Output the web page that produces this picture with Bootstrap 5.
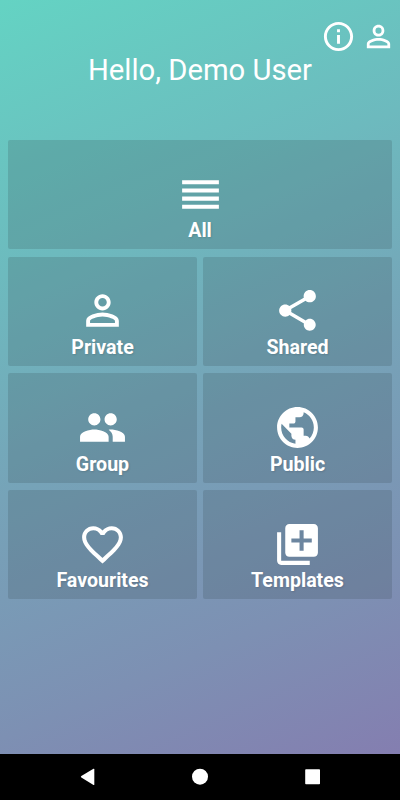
<!DOCTYPE html>
<html lang="en">
<head>
<meta charset="utf-8">
<meta name="viewport" content="width=device-width, initial-scale=1">
<title>Home</title>
<link href="https://cdn.jsdelivr.net/npm/bootstrap@5.3.0/dist/css/bootstrap.min.css" rel="stylesheet">
<style>
body{font-family:Roboto,sans-serif;height:800px;overflow:hidden;background:#000}
.screen{height:753.5px;background:linear-gradient(157deg,#64d3c3 0%,#6dbabe 30%,#76a3b8 54%,#7d90b3 80%,#847eb0 100%)}
.top-actions{height:52px;padding:19.3px 4.5px 0 0;gap:4.5px}
.top-actions svg{width:35px;height:35px}
.greeting{font-size:29.25px;line-height:36px;font-weight:400;height:88px}
.tiles{display:grid;grid-template-columns:1fr 1fr;grid-auto-rows:109.4px;gap:7.3px 6px;padding:0 8px}
.tile{background:rgba(44,60,66,.18);border-radius:2px;padding-top:29.8px;color:#fff;font-size:19.6px;line-height:24px;font-weight:700;text-decoration:none}
.tile-wide{grid-column:span 2}
.tile svg{width:49px;height:49px}
.tile span{margin-top:.4px;text-shadow:1px 1px 2px rgba(0,0,0,.12)}
.sysbar{height:46.5px;background:#000}
svg{fill:#fff;display:block}
</style>
<script src="https://cdn.jsdelivr.net/npm/bootstrap@5.3.0/dist/js/bootstrap.bundle.min.js"></script>
</head>
<body class="d-flex flex-column m-0">
<main class="screen text-white">
  <header class="top-actions d-flex justify-content-end">
    <svg viewBox="0 0 24 24"><path d="M11 7h2v2h-2zm0 4h2v6h-2zm1-9C6.480 2 2 6.480 2 12s4.480 10 10 10 10-4.480 10-10S17.520 2 12 2zm0 18c-4.410 0-8-3.590-8-8s3.590-8 8-8 8 3.590 8 8-3.590 8-8 8z"/></svg>
    <svg viewBox="0 0 24 24"><path d="M12 5.900a2.100 2.100 0 1 1 0 4.200 2.100 2.100 0 0 1 0-4.200m0 9c2.970 0 6.100 1.460 6.100 2.100v1.100H5.900V17c0-.640 3.130-2.100 6.100-2.100M12 4C9.790 4 8 5.790 8 8s1.790 4 4 4 4-1.790 4-4-1.790-4-4-4zm0 9c-2.670 0-8 1.340-8 4v3h16v-3c0-2.660-5.330-4-8-4z"/></svg>
  </header>
  <h1 class="greeting text-center m-0">Hello, Demo User</h1>
  <nav class="tiles">
    <a class="tile tile-wide d-flex flex-column align-items-center" href="#">
      <svg viewBox="0 0 24 24"><path d="M3 15h18v-2H3v2zm0 4h18v-2H3v2zm0-8h18V9H3v2zm0-6v2h18V5H3z"/></svg><span>All</span></a>
    <a class="tile d-flex flex-column align-items-center" href="#">
      <svg viewBox="0 0 24 24"><path d="M12 5.900a2.100 2.100 0 1 1 0 4.200 2.100 2.100 0 0 1 0-4.200m0 9c2.970 0 6.100 1.460 6.100 2.100v1.100H5.900V17c0-.640 3.130-2.100 6.100-2.100M12 4C9.790 4 8 5.790 8 8s1.790 4 4 4 4-1.790 4-4-1.790-4-4-4zm0 9c-2.670 0-8 1.340-8 4v3h16v-3c0-2.660-5.330-4-8-4z"/></svg><span>Private</span></a>
    <a class="tile d-flex flex-column align-items-center" href="#">
      <svg viewBox="0 0 24 24"><path d="M18 16.080c-.760 0-1.440.300-1.960.770L8.910 12.700c.050-.230.090-.460.090-.700s-.040-.470-.090-.700l7.050-4.110c.540.500 1.250.810 2.040.810 1.660 0 3-1.340 3-3s-1.340-3-3-3-3 1.340-3 3c0 .240.040.470.090.700L8.040 9.810C7.500 9.310 6.790 9 6 9c-1.660 0-3 1.340-3 3s1.340 3 3 3c.790 0 1.500-.310 2.040-.810l7.120 4.160c-.050.210-.080.430-.080.650 0 1.610 1.310 2.920 2.920 2.920s2.920-1.310 2.920-2.920-1.310-2.920-2.920-2.920z"/></svg><span>Shared</span></a>
    <a class="tile d-flex flex-column align-items-center" href="#">
      <svg viewBox="0 0 24 24"><path d="M16 11c1.660 0 2.990-1.340 2.990-3S17.660 5 16 5s-3 1.340-3 3 1.340 3 3 3zm-8 0c1.660 0 2.990-1.340 2.990-3S9.660 5 8 5 5 6.340 5 8s1.340 3 3 3zm0 2c-2.330 0-7 1.170-7 3.500V19h14v-2.500c0-2.330-4.670-3.500-7-3.500zm8 0c-.290 0-.620.020-.970.050 1.160.840 1.970 1.970 1.970 3.450V19h6v-2.500c0-2.330-4.670-3.500-7-3.500z"/></svg><span>Group</span></a>
    <a class="tile d-flex flex-column align-items-center" href="#">
      <svg viewBox="0 0 24 24"><path d="M12 2C6.480 2 2 6.480 2 12s4.480 10 10 10 10-4.480 10-10S17.520 2 12 2zm-1 17.930c-3.950-.490-7-3.850-7-7.930 0-.620.080-1.210.210-1.790L9 15v1c0 1.100.900 2 2 2v1.930zm6.900-2.540c-.260-.810-1-1.390-1.900-1.390h-1v-3c0-.550-.450-1-1-1H8v-2h2c.550 0 1-.450 1-1V7h2c1.100 0 2-.900 2-2v-.410c2.930 1.190 5 4.060 5 7.410 0 2.080-.800 3.970-2.100 5.390z"/></svg><span>Public</span></a>
    <a class="tile d-flex flex-column align-items-center" href="#">
      <svg viewBox="0 0 24 24"><path d="M16.500 3c-1.740 0-3.410.810-4.500 2.090C10.910 3.810 9.240 3 7.500 3 4.420 3 2 5.420 2 8.500c0 3.780 3.400 6.860 8.550 11.540L12 21.350l1.450-1.320C18.600 15.360 22 12.280 22 8.500 22 5.420 19.580 3 16.500 3zm-4.400 15.550l-.100.100-.100-.100C7.140 14.240 4 11.390 4 8.500 4 6.500 5.500 5 7.500 5c1.540 0 3.040.990 3.570 2.360h1.870C13.460 5.990 14.960 5 16.500 5c2 0 3.500 1.500 3.500 3.500 0 2.890-3.140 5.740-7.900 10.050z"/></svg><span>Favourites</span></a>
    <a class="tile d-flex flex-column align-items-center" href="#">
      <svg viewBox="0 0 24 24"><path d="M4 6H2v14c0 1.100.900 2 2 2h14v-2H4V6zm16-4H8c-1.100 0-2 .900-2 2v12c0 1.100.900 2 2 2h12c1.100 0 2-.900 2-2V4c0-1.100-.900-2-2-2zm-1 9h-4v4h-2v-4H9V9h4V5h2v4h4v2z"/></svg><span>Templates</span></a>
  </nav>
</main>
<footer class="sysbar d-flex justify-content-center align-items-center">
  <svg width="240" height="18" viewBox="0 0 240 18"><path d="M14.300 1.200v15.200q0 .8-.8.500L1.300 9.600q-.9-.8 0-1.500L13.500.8q.8-.4.8.4z"/><circle cx="120" cy="8.700" r="8"/><rect x="225.200" y="1.300" width="14.800" height="15" rx=".8"/></svg>
</footer>
</body>
</html>
